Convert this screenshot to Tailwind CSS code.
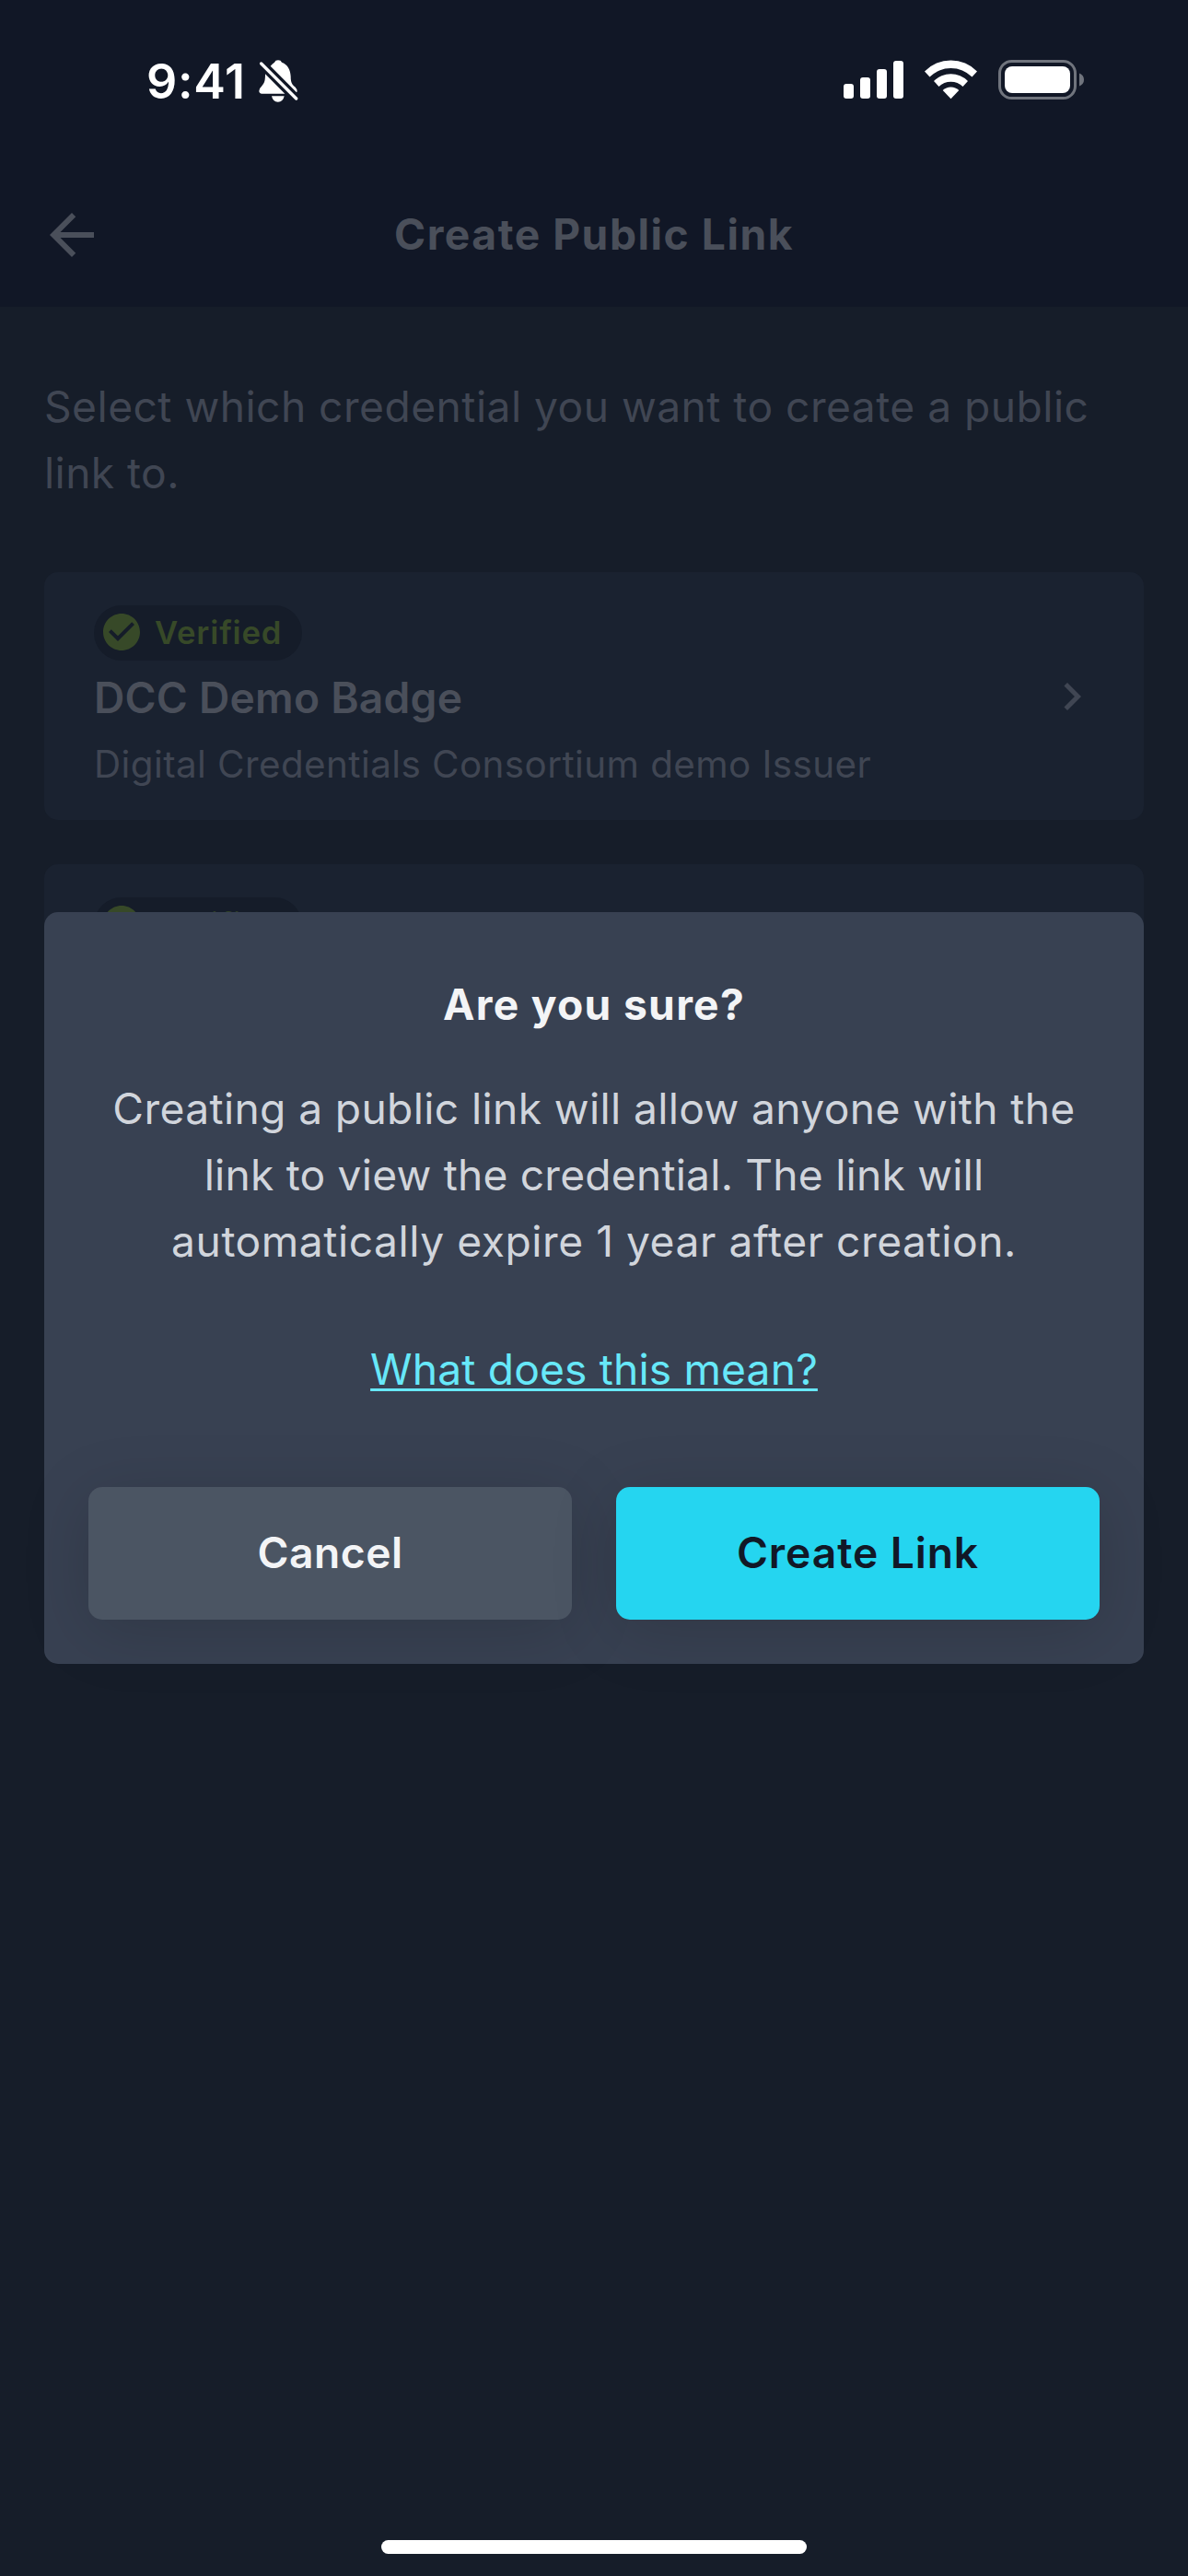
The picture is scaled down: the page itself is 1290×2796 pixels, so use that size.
<!DOCTYPE html>
<html lang="en">
<head>
<meta charset="utf-8">
<title>Create Public Link</title>
<script src="https://cdn.jsdelivr.net/npm/@tailwindcss/browser@4"></script>
</head>
<body class="relative w-[1290px] h-[2796px] overflow-hidden bg-[#161d29] font-[Inter,sans-serif] text-[46.2px] leading-[72px] whitespace-nowrap">

  <!-- Status bar and header -->
  <header class="h-[333px] bg-[#111726] flex flex-col">
    <div class="h-[177px] pl-[159px] pr-[113px] flex items-start justify-between text-white">
      <div class="flex items-start">
        <span class="mt-[53px] w-[121px] text-[52px] font-semibold tracking-[0.7px]">9:41</span>
        <svg class="mt-[63px] w-[44px] h-[49px]" viewBox="418 39 132 147" fill="currentColor">
          <path d="M459 65C463 60 468 56 472 53Q475 46 484 46Q493 46 496 53C516 60 524 78 525 98C525 120 530 125 539 133Q546 140 546 148L544 151Z"/>
          <path d="M442 91L506 155H431Q422 154 422 146Q422 138 430 131C440 121 442 112 442 91Z"/>
          <path d="M463 163H504Q500 182 483.500 182Q467 182 463 163Z"/>
          <path d="M429 57L543 171" stroke="currentColor" stroke-width="10" stroke-linecap="round"/>
        </svg>
      </div>
      <svg class="mt-[60px] w-[262px] h-[52px]" viewBox="915 60 262 52" fill="currentColor">
        <rect x="916" y="91" width="11" height="16" rx="3"/>
        <rect x="934" y="84" width="11" height="23" rx="3"/>
        <rect x="952" y="75" width="11" height="32" rx="3"/>
        <rect x="970" y="66" width="11" height="41" rx="3"/>
        <path d="M1004 77.500A39.800 39.800 0 0 1 1061 77.500L1055.500 83.500A32.600 32.600 0 0 0 1009.500 83.500Z"/>
        <path d="M1014 88A26 26 0 0 1 1051 88L1045.500 94A18.500 18.500 0 0 0 1019.500 94Z"/>
        <path d="M1023.700 98A12.500 12.500 0 0 1 1041.300 98L1032.500 107.300Z"/>
        <rect x="1085.500" y="66.500" width="82" height="40" rx="13" fill="none" stroke="#70747d" stroke-width="3"/>
        <rect x="1091" y="72" width="71" height="29" rx="8"/>
        <path d="M1172 79.500Q1177 81.500 1177 86.500Q1177 91.500 1172 93.500Z" fill="#70747d"/>
      </svg>
    </div>
    <div class="h-[156px] px-[42px] grid grid-cols-[72px_1fr_72px] items-center text-[#4a4f5a]">
      <svg class="w-[72px] h-[72px]" viewBox="0 0 24 24" fill="currentColor"><path d="M20 11H7.830l5.590-5.590L12 4l-8 8 8 8 1.410-1.410L7.830 13H20v-2z"/></svg>
      <h1 class="text-center font-bold tracking-[1.52px] pb-[2px]">Create Public Link</h1>
    </div>
  </header>

  <!-- Credential list -->
  <main class="px-12 pt-[72px] text-[#404653]">
    <p><span class="tracking-[0.46px]">Select which credential you want to create a public</span><br><span class="tracking-[0.4px]">link to.</span></p>
    <div class="mt-[72px] flex flex-col gap-12">
      <section class="h-[269px] rounded-[15px] bg-[#1a2230] pl-[54px] pr-12 pt-9 flex justify-between">
        <div>
          <div class="w-[226px] h-[60px] rounded-[30px] bg-[#151c29] pl-[6px] flex items-center text-[#374928]">
            <svg class="w-12 h-12 mb-[2px]" viewBox="0 0 24 24" fill="currentColor"><path d="M12 2C6.480 2 2 6.480 2 12s4.480 10 10 10 10-4.480 10-10S17.520 2 12 2zm-2 15l-5-5 1.410-1.410L10 14.170l7.590-7.590L19 8l-9 9z"/></svg>
            <span class="ml-3 pb-[2px] text-[34.7px] leading-[58px] font-semibold tracking-[0.8px]">Verified</span>
          </div>
          <h2 class="mt-1 font-semibold tracking-[0.23px] text-[#4a4f5a]">DCC Demo Badge</h2>
          <p class="pt-px text-[40.4px] tracking-[0.42px]">Digital Credentials Consortium demo Issuer</p>
        </div>
        <svg class="mt-[69px] w-[60px] h-[60px]" viewBox="0 0 24 24" fill="currentColor"><path d="M10 6L8.590 7.410 13.170 12l-4.580 4.590L10 18l6-6z"/></svg>
      </section>
      <section class="h-[269px] rounded-[15px] bg-[#1a2230] pl-[54px] pt-9">
        <div class="w-[226px] h-[60px] rounded-[30px] bg-[#151c29] pl-[6px] flex items-center text-[#374928]">
          <svg class="w-12 h-12 mb-[2px]" viewBox="0 0 24 24" fill="currentColor"><path d="M12 2C6.480 2 2 6.480 2 12s4.480 10 10 10 10-4.480 10-10S17.520 2 12 2zm-2 15l-5-5 1.410-1.410L10 14.170l7.590-7.590L19 8l-9 9z"/></svg>
          <span class="ml-3 pb-[2px] text-[34.7px] leading-[58px] font-semibold tracking-[0.8px]">Verified</span>
        </div>
      </section>
    </div>
  </main>

  <!-- Confirmation dialog -->
  <div role="dialog" class="absolute left-12 top-[990px] w-[1194px] h-[816px] rounded-[15px] bg-[#384152] px-12 pt-16 text-center text-gray-300">
    <h2 class="font-bold tracking-[1.3px] text-gray-100">Are you sure?</h2>
    <p class="mt-[41px]"><span class="tracking-[0.36px]">Creating a public link will allow anyone with the</span><br><span class="tracking-[0.2px]">link to view the credential. The link will</span><br><span class="tracking-[0.54px]">automatically expire 1 year after creation.</span></p>
    <p class="mt-[67px] text-[#67e8f9]"><span class="tracking-[0.15px] underline decoration-[3px] underline-offset-[4px] [text-decoration-skip-ink:none]">What does this mean?</span></p>
    <div class="mt-[92px] grid grid-cols-2 gap-12">
      <button class="h-36 pb-[3px] rounded-[15px] bg-[#4b5563] text-gray-100 font-semibold tracking-[0.5px] shadow-[0_12px_72px_rgba(0,0,0,0.15)]">Cancel</button>
      <button class="h-36 pb-[3px] rounded-[15px] bg-[#25d5f0] text-[#111827] font-semibold tracking-[0.9px] shadow-[0_12px_72px_rgba(0,0,0,0.15)]">Create Link</button>
    </div>
  </div>

  <!-- Home indicator -->
  <div class="absolute left-[414px] top-[2757px] w-[462px] h-[15px] rounded-full bg-white"></div>
</body>
</html>
